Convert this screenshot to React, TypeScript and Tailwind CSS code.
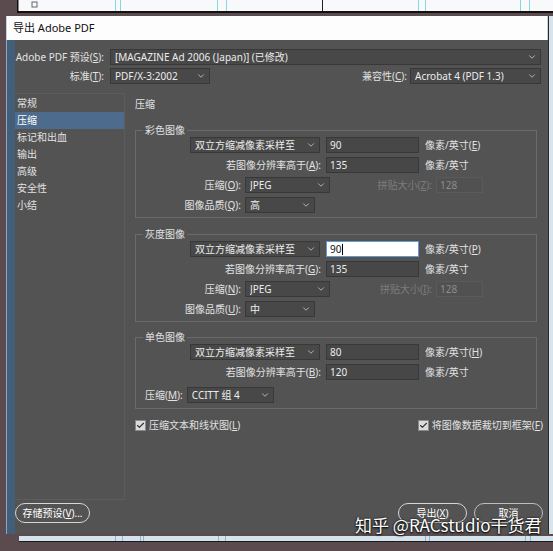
import React from 'react';
import { ChevronDown, Check } from 'lucide-react';

// accelerator key label, e.g. 压缩(O):
const Acc: React.FC<{ text: string; k: string; colon?: boolean }> = ({ text, k, colon }) => (
    <>
        {text}(<span className="underline underline-offset-[1px]">{k}</span>){colon ? ':' : ''}
    </>
);

const Select: React.FC<{ value: string; className: string }> = ({ value, className }) => (
    <div className={`flex h-[16px] shrink-0 items-center justify-between border border-[#383838] bg-[#484848] pl-[4px] pr-[3px] text-[#ececec] ${className}`}>
        <span className="truncate leading-[14px]">{value}</span>
        <ChevronDown className="h-[10px] w-[10px] shrink-0 text-[#c8c8c8]" strokeWidth={2} />
    </div>
);

const Field: React.FC<{ value: string; className: string; focus?: boolean; disabled?: boolean }> = ({ value, className, focus, disabled }) => (
    <div
        className={`flex h-[16px] shrink-0 items-center pl-[3px] leading-[14px] ${className} ${
            focus
                ? 'border border-[#5d9ad6] bg-white text-[#111]'
                : disabled
                ? 'border border-[#5a5a5a] bg-[#515151] text-[#8c8c8c]'
                : 'border border-[#383838] bg-[#474747] text-[#ececec]'
        }`}
    >
        {value}
        {focus && <span className="ml-[1px] h-[11px] w-px bg-black" />}
    </div>
);

const CheckBox: React.FC = () => (
    <span className="flex h-[11px] w-[11px] shrink-0 items-center justify-center border border-[#8a8a8a] bg-[#dcdcdc]">
        <Check className="h-[9px] w-[9px] text-[#333]" strokeWidth={3} />
    </span>
);

type Group = {
    title: string;
    down: string;
    unitKey: string;
    above: string;
    aboveKey: string;
    compKey: string;
    tileKey: string;
    quality: string;
    qualityKey: string;
    focus?: boolean;
};

const groups: Group[] = [
    { title: '彩色图像', down: '90', unitKey: 'E', above: '135', aboveKey: 'A', compKey: 'O', tileKey: 'Z', quality: '高', qualityKey: 'Q' },
    { title: '灰度图像', down: '90', unitKey: 'P', above: '135', aboveKey: 'G', compKey: 'N', tileKey: 'I', quality: '中', qualityKey: 'U', focus: true },
];

const navItems = ['常规', '压缩', '标记和出血', '输出', '高级', '安全性', '小结'];

const Legend: React.FC<{ title: string }> = ({ title }) => (
    <div className="-mt-[8px] ml-[7px] w-fit bg-[#535353] px-[2px] leading-[14px]">{title}</div>
);

const DownRow: React.FC<{ value: string; unitKey: string; focus?: boolean }> = ({ value, unitKey, focus }) => (
    <div className="flex h-[16px] items-center">
        <Select value="双立方缩减像素采样至" className="ml-[54px] w-[130px]" />
        <Field value={value} focus={focus} className="ml-[6px] w-[93px]" />
        <span className="ml-[6px]">
            <Acc text="像素/英寸" k={unitKey} />
        </span>
    </div>
);

const AboveRow: React.FC<{ value: string; k: string }> = ({ value, k }) => (
    <div className="flex h-[16px] items-center">
        <span className="w-[185px] text-right">
            <Acc text="若图像分辨率高于" k={k} colon />
        </span>
        <Field value={value} className="ml-[5px] w-[93px]" />
        <span className="ml-[6px]">像素/英寸</span>
    </div>
);

const ImageGroup: React.FC<{ g: Group; className: string }> = ({ g, className }) => (
    <div className={`border border-[#6a6a6a] pb-[4px] ${className}`}>
        <Legend title={g.title} />
        <div className="flex flex-col gap-[4px]">
            <DownRow value={g.down} unitKey={g.unitKey} focus={g.focus} />
            <AboveRow value={g.above} k={g.aboveKey} />
            <div className="flex h-[16px] items-center">
                <span className="w-[105px] text-right">
                    <Acc text="压缩" k={g.compKey} colon />
                </span>
                <Select value="JPEG" className="ml-[4px] w-[85px]" />
                <span className="ml-[42px] w-[60px] text-right text-[#7c7c7c]">
                    <Acc text="拼贴大小" k={g.tileKey} colon />
                </span>
                <Field value="128" disabled className="ml-[4px] w-[47px]" />
            </div>
            <div className="flex h-[16px] items-center">
                <span className="w-[105px] text-right">
                    <Acc text="图像品质" k={g.qualityKey} colon />
                </span>
                <Select value={g.quality} className="ml-[4px] w-[70px]" />
            </div>
        </div>
    </div>
);

const TopStrip: React.FC = () => (
    <svg width="553" height="13" className="block shrink-0">
        <rect width="553" height="13" fill="#5b4a4e" />
        <rect x="18" y="0" width="535" height="11" fill="#f7f9fa" />
        <rect x="17" y="11" width="536" height="2" fill="#111" />
        <rect x="17" y="0" width="1.5" height="13" fill="#111" />
        {[115, 120, 217, 226, 418, 425, 520, 529].map((x) => (
            <rect key={x} x={x} y="0" width="1" height="11" fill="#86d6e3" />
        ))}
        <rect x="322" y="0" width="1" height="11" fill="#222" />
        <rect x="32" y="2" width="5" height="5" fill="none" stroke="#666" strokeWidth="1" />
    </svg>
);

const BottomStrip: React.FC = () => (
    <svg width="553" height="17" className="block shrink-0">
        <rect width="553" height="17" fill="#5b4a4e" />
        <rect x="19" y="2" width="534" height="5" fill="#d4e3ec" />
        <rect x="19" y="7" width="534" height="1" fill="#1a1a1a" />
        {[115, 122, 140, 143, 218, 225, 425, 429, 525, 530].map((x) => (
            <rect key={x} x={x} y="2" width="1" height="5" fill="#8fb5c8" />
        ))}
    </svg>
);

const App: React.FC = () => {
    return (
        <div className="relative flex h-[551px] w-[553px] flex-col overflow-hidden bg-[#5b4a4e] font-['Noto_Sans','Noto_Sans_CJK_SC',sans-serif] text-[10px] text-[#e2e2e2]">
            <TopStrip />
            <div className="mt-[3px] flex h-[518px] shrink-0">
                <div className="ml-[6px] flex w-[542px] flex-col">
                    {/* title bar */}
                    <div className="flex h-[24px] shrink-0 items-center border-x border-[#c7d3de] bg-[#fdfdfd] pl-[6px] text-[11px] text-[#111]">
                        导出 Adobe PDF
                    </div>
                    <div className="flex flex-1">
                        <div className="w-[9px] border-l border-[#86a8c6] bg-[#425e79]" />
                        <div className="flex flex-1 flex-col bg-[#535353]">
                            {/* preset rows */}
                            <div className="mt-[9px] flex h-[16px] items-center pr-[7px]">
                                <span className="w-[89px] text-right">
                                    <Acc text="Adobe PDF 预设" k="S" colon />
                                </span>
                                <Select value="[MAGAZINE Ad 2006 (Japan)] (已修改)" className="ml-[6px] flex-1" />
                            </div>
                            <div className="mt-[3px] flex h-[16px] items-center pr-[7px]">
                                <span className="w-[89px] text-right">
                                    <Acc text="标准" k="T" colon />
                                </span>
                                <Select value="PDF/X-3:2002" className="ml-[6px] w-[100px]" />
                                <span className="ml-auto">
                                    <Acc text="兼容性" k="C" colon />
                                </span>
                                <Select value="Acrobat 4 (PDF 1.3)" className="ml-[3px] w-[131px]" />
                            </div>

                            {/* main area */}
                            <div className="mt-[9px] flex h-[407px]">
                                <div className="flex w-[110px] flex-col border-t border-r border-b border-[#5c5c5c] pt-[1px]">
                                    {navItems.map((item) => (
                                        <div
                                            key={item}
                                            className={`flex h-[17px] items-center pl-[2px] ${item === '压缩' ? 'bg-[#4d6b8d] text-white' : ''}`}
                                        >
                                            {item}
                                        </div>
                                    ))}
                                </div>
                                <div className="flex flex-1 flex-col pl-[10px] pr-[11px]">
                                    <div className="h-[37px] pt-[4px] leading-[14px]">压缩</div>
                                    <ImageGroup g={groups[0]} className="" />
                                    <ImageGroup g={groups[1]} className="mt-[16px]" />
                                    <div className="mt-[15px] border border-[#6a6a6a] pb-[5px]">
                                        <Legend title="单色图像" />
                                        <div className="flex flex-col">
                                            <DownRow value="80" unitKey="H" />
                                            <div className="mt-[4px]">
                                                <AboveRow value="120" k="B" />
                                            </div>
                                            <div className="mt-[7px] flex h-[16px] items-center">
                                                <span className="ml-[9px]">
                                                    <Acc text="压缩" k="M" colon />
                                                </span>
                                                <Select value="CCITT 组 4" className="ml-[4px] w-[87px]" />
                                            </div>
                                        </div>
                                    </div>
                                    <div className="mt-[9px] flex h-[14px] items-center -mr-[6px]">
                                        <CheckBox />
                                        <span className="ml-[3px] leading-[14px]">
                                            <Acc text="压缩文本和线状图" k="L" />
                                        </span>
                                        <span className="ml-auto flex items-center leading-[14px]">
                                            <CheckBox />
                                            <span className="ml-[3px]">
                                                <Acc text="将图像数据裁切到框架" k="F" />
                                            </span>
                                        </span>
                                    </div>
                                </div>
                            </div>

                            {/* footer buttons */}
                            <div className="mt-[3px] flex h-[20px] items-center pr-[5px]">
                                <button className="flex h-[20px] w-[75px] items-center justify-center rounded-full border-[1.5px] border-[#d6d6d6] text-white">
                                    <Acc text="存储预设" k="V" />
                                    ...
                                </button>
                                <button className="ml-auto flex h-[20px] w-[69px] items-center justify-center rounded-full border-[1.5px] border-[#d6d6d6] text-white">
                                    <Acc text="导出" k="X" />
                                </button>
                                <button className="ml-[7px] flex h-[20px] w-[69px] items-center justify-center rounded-full border-[1.5px] border-[#bdbdbd] text-white">
                                    取消
                                </button>
                            </div>
                        </div>
                    </div>
                </div>
                <div className="flex-1 border-l border-[#2a2a2a] bg-[#d8e4ec]" />
            </div>
            <BottomStrip />

            {/* watermark overlay */}
            <div className="absolute left-[355px] top-[514px] font-['Noto_Sans_CJK_SC',sans-serif] text-[17px] leading-[22px] text-white [text-shadow:0_0_2px_#000,0_1px_2px_#000]">
                知乎 @RACstudio干货君
            </div>
        </div>
    );
};

export default App;
